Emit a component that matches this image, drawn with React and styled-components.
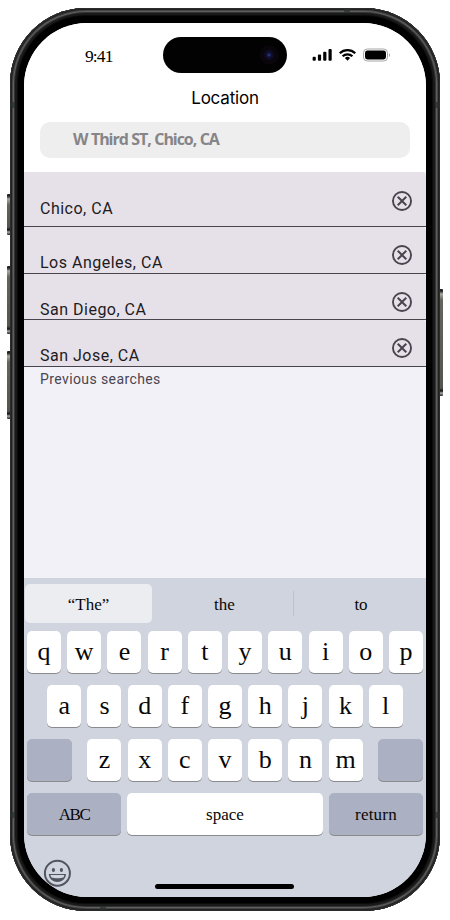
import React from "react";
import styled, { createGlobalStyle } from "styled-components";

const GlobalStyle = createGlobalStyle`
  * { box-sizing: border-box; }
  body { margin: 0; background: #fff; }
`;

const Stage = styled.main`
  width: 450px;
  height: 920px;
  padding: 8px 0 0 10px;
  overflow: hidden;
`;

const Phone = styled.div`
  position: relative;
  width: 430px;
  height: 903px;
  padding: 15px 14px 14px;
  border-radius: 76px;
  background: #000;
  box-shadow:
    inset 0 0 0 1px #2c2c2c,
    inset 0 0 0 2px #222,
    inset 0 0 0 3px #454545,
    inset 0 0 0 4px #5e5e5d,
    inset 0 0 0 5px #333,
    inset 0 0 0 7px #191919,
    inset 0 0 0 8px #0b0b0b;
`;

const SideButton = styled.span`
  position: absolute;
  z-index: -1;
  top: ${(p) => p.$top}px;
  ${(p) => p.$side}: -3px;
  width: 5px;
  height: ${(p) => p.$height}px;
  border-radius: 1px;
  background: linear-gradient(#222 0 2px, #aaa99f 5px, #64645f 11px, #555550 calc(100% - 8px), #111 calc(100% - 5px), #aaa calc(100% - 3px), #222 100%);
`;

const Antenna = styled.span`
  position: absolute;
  top: ${(p) => p.$top}px;
  left: ${(p) => p.$left}px;
  width: ${(p) => p.$w}px;
  height: ${(p) => p.$h}px;
  background: #2b3032;
  opacity: 0.75;
`;

const Screen = styled.div`
  display: flex;
  flex-direction: column;
  width: 402px;
  height: 874px;
  border-radius: 63px;
  overflow: hidden;
  background: #f3f1f8;
`;

const Header = styled.header`
  height: 149px;
  flex: none;
  background: #fff;
`;

const StatusBar = styled.div`
  display: flex;
  align-items: center;
  height: 64px;
  padding: 0 35px 0 61px;
`;

const Time = styled.span`
  flex: 1;
  font: 17.5px/20px "Liberation Serif", serif;
  letter-spacing: -0.9px;
  padding-top: 1px;
`;

const StatusIcons = styled.svg`
  display: block;
  width: 79px;
  height: 16px;
`;

const Island = styled.div`
  position: absolute;
  top: 29px;
  left: 153px;
  width: 124px;
  height: 36px;
  border-radius: 18px;
  background:
    radial-gradient(circle at 106px 18px, #292e78 0 1px, #101238 2px, #0c0b22 4px, #09050a 6px 9px, transparent 10px),
    #020202;
`;

const Title = styled.h1`
  margin: 0;
  height: 35px;
  text-align: center;
  font: 400 17px/22px Inter, sans-serif;
  letter-spacing: -0.2px;
`;

const SearchField = styled.div`
  height: 36px;
  margin: 0 16px;
  padding-left: 33px;
  border-radius: 10px;
  background: #eee;
  color: #858587;
  font: 700 16px/35px "Open Sans", sans-serif;
  letter-spacing: -1.05px;
  word-spacing: 0.4px;
`;

const Searches = styled.ul`
  margin: 0;
  padding: 0;
  list-style: none;
  background: #f3f1f8;
`;

const SearchRow = styled.li`
  display: flex;
  justify-content: space-between;
  height: ${(p) => p.$height}px;
  padding: ${(p) => p.$top}px 12px 0 16px;
  border-bottom: 1px solid #49454f;
  border-top-right-radius: 4px;
  background: #e6e0e9;
  color: #1d1b20;
`;

const City = styled.span`
  padding-top: 8px;
  font: 400 16px/24px Roboto, sans-serif;
  letter-spacing: 0.5px;
`;

const ClearIcon = styled.svg`
  width: 24px;
  height: 24px;
  fill: #49454f;
`;

const Caption = styled.p`
  margin: 0;
  padding: 4px 16px;
  color: #49454f;
  font: 400 14px/17px Roboto, sans-serif;
  letter-spacing: 0.4px;
`;

const Keyboard = styled.section`
  height: 319px;
  margin-top: auto;
  padding: 6px 3px 0;
  background: #d0d4df;
  font-family: "Liberation Serif", serif;
  color: #080808;
`;

const Suggestions = styled.div`
  display: grid;
  grid-template-columns: 127px 142px 1fr;
  height: 39px;
  margin: 0 -1px 8px -2px;
  align-items: center;
`;

const Suggestion = styled.div`
  display: flex;
  align-items: center;
  justify-content: center;
  height: ${(p) => (p.$active ? 39 : 25)}px;
  padding-left: ${(p) => p.$shift || 0}px;
  padding-top: ${(p) => (p.$active ? 2 : 3)}px;
  border-radius: ${(p) => (p.$active ? 5 : 0)}px;
  border-right: ${(p) => (p.$divider ? "1px solid #bfc1cc" : "0")};
  background: ${(p) => (p.$active ? "#ecedf1" : "transparent")};
  font-size: 17px;
`;

const KeyRow = styled.div`
  display: flex;
  justify-content: space-between;
  height: 42px;
  margin: 0 ${(p) => p.$inset || 0}px 12px;
`;

const LetterGroup = styled.div`
  display: flex;
  gap: 6.2px;
`;

const Key = styled.div`
  display: flex;
  align-items: center;
  justify-content: center;
  width: ${(p) => p.$width || 34}px;
  height: 42px;
  padding-top: ${(p) => (p.$label ? 2 : 0)}px;
  border-radius: 5px;
  background: ${(p) => (p.$dark ? "#abb0c3" : "#fff")};
  box-shadow: 0 1px 0 #898a8d;
  font-size: ${(p) => (p.$label ? 17 : 26)}px;
  letter-spacing: ${(p) => p.$tracking || 0}px;
`;

const Footer = styled.div`
  height: 50px;
  padding: 12px 0 0 16px;
`;

const Emoji = styled.svg`
  display: block;
  width: 28px;
  height: 28px;
`;

const HomeIndicator = styled.div`
  position: absolute;
  left: 145px;
  bottom: 22px;
  width: 139px;
  height: 5px;
  border-radius: 3px;
  background: #000;
`;

const searches = [
  { city: "Chico, CA", height: 55, top: 17 },
  { city: "Los Angeles, CA", height: 47, top: 16 },
  { city: "San Diego, CA", height: 46, top: 16 },
  { city: "San Jose, CA", height: 47, top: 16 },
];

function Letters({ text }) {
  return text.split("").map((letter) => <Key key={letter}>{letter}</Key>);
}

function Status() {
  return (
    <StatusIcons viewBox="0 0 79 16">
      <rect x="0.6" y="9.7" width="3.2" height="4" rx="1" />
      <rect x="5.9" y="7.4" width="3.2" height="6.3" rx="1" />
      <rect x="11.2" y="4.8" width="3.2" height="8.9" rx="1" />
      <rect x="16.5" y="2" width="3.2" height="11.7" rx="1" />
      <g fill="none" stroke="#000" strokeWidth="2.3">
        <path d="M27.8 6.2a11 11 0 0 1 15.4 0" />
        <path d="M30.6 9.3a7 7 0 0 1 9.8 0" />
      </g>
      <path d="m35.5 13.7-2.6-2.7a3.8 3.8 0 0 1 5.2 0z" />
      <rect x="51.5" y="2" width="24" height="12" rx="3.8" fill="none" stroke="#a6a6a6" />
      <rect x="53" y="3.5" width="21" height="9" rx="2.4" />
      <path d="M77 6.2c1.3.7 1.3 3 0 3.7z" fill="#a0a0a0" />
    </StatusIcons>
  );
}

export default function App() {
  return (
    <>
      <GlobalStyle />
      <Stage>
        <Phone>
          <SideButton $side="left" $top={186} $height={41} />
          <SideButton $side="left" $top={258} $height={68} />
          <SideButton $side="left" $top={343} $height={68} />
          <SideButton $side="right" $top={281} $height={107} />
          <Antenna $left={0} $top={94} $w={5} $h={6} />
          <Antenna $left={425} $top={94} $w={5} $h={6} />
          <Antenna $left={0} $top={804} $w={5} $h={6} />
          <Antenna $left={425} $top={804} $w={5} $h={6} />
          <Antenna $left={334} $top={1} $w={6} $h={4} />
          <Antenna $left={90} $top={898} $w={6} $h={4} />
          <Screen>
            <Header>
              <StatusBar>
                <Time>9:41</Time>
                <Status />
              </StatusBar>
              <Title>Location</Title>
              <SearchField>W Third ST, Chico, CA</SearchField>
            </Header>
            <Searches>
              {searches.map(({ city, height, top }) => (
                <SearchRow key={city} $height={height} $top={top}>
                  <City>{city}</City>
                  <ClearIcon viewBox="0 0 24 24">
                    <path d="M12 2a10 10 0 1 0 0 20 10 10 0 0 0 0-20Zm0 18.1a8.1 8.1 0 1 1 0-16.2 8.1 8.1 0 0 1 0 16.2ZM15.6 7 12 10.6 8.4 7 7 8.4l3.6 3.6L7 15.6 8.4 17l3.6-3.6 3.6 3.6 1.4-1.4-3.6-3.6L17 8.4Z" />
                  </ClearIcon>
                </SearchRow>
              ))}
            </Searches>
            <Caption>Previous searches</Caption>
            <Keyboard>
              <Suggestions>
                <Suggestion $active>“The”</Suggestion>
                <Suggestion $divider $shift={4}>the</Suggestion>
                <Suggestion $shift={4}>to</Suggestion>
              </Suggestions>
              <KeyRow>
                <Letters text="qwertyuiop" />
              </KeyRow>
              <KeyRow $inset={20.3}>
                <Letters text="asdfghjkl" />
              </KeyRow>
              <KeyRow>
                <Key $width={45} $dark />
                <LetterGroup>
                  <Letters text="zxcvbnm" />
                </LetterGroup>
                <Key $width={45} $dark />
              </KeyRow>
              <KeyRow>
                <Key $width={94} $dark $label $tracking={-1.5}>ABC</Key>
                <Key $width={195.5} $label>space</Key>
                <Key $width={94} $dark $label $tracking={0.2}>return</Key>
              </KeyRow>
              <Footer>
                <Emoji viewBox="0 0 28 28" fill="none">
                  <circle cx="14.4" cy="14.2" r="12.5" stroke="#505560" strokeWidth="2" />
                  <ellipse cx="10.4" cy="11.1" rx="1.6" ry="2" fill="#505560" />
                  <ellipse cx="18.4" cy="11.1" rx="1.6" ry="2" fill="#505560" />
                  <path d="M5.8 15h17.2c-.5 10.6-16.7 10.6-17.2 0Z" fill="#505560" />
                  <path d="M7.5 16.1h13.8l-.6 2.1c-3.6 1.3-9 1.3-12.6 0Z" fill="#d0d4df" />
                </Emoji>
              </Footer>
            </Keyboard>
          </Screen>
          <Island />
          <HomeIndicator />
        </Phone>
      </Stage>
    </>
  );
}
